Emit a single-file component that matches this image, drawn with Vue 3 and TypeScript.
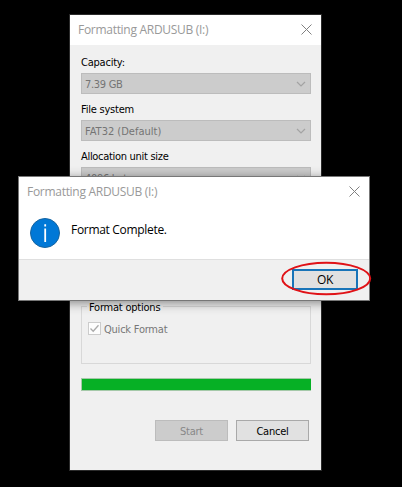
<script setup lang="ts">
interface Field { label: string; value: string; tone: string }

const title = 'Formatting ARDUSUB (I:)'
const fields: Field[] = [
  { label: 'Capacity:', value: '7.39 GB', tone: 'narrow' },
  { label: 'File system', value: 'FAT32 (Default)', tone: 'wide' },
  { label: 'Allocation unit size', value: '4096 bytes', tone: 'narrow' },
]
</script>

<template>
  <main class="desktop">
    <section class="window">
      <header class="titlebar">
        <span>{{ title }}</span>
        <svg class="close" width="11" height="11" viewBox="0 0 11 11"><path d="M.5.5l10 10M10.500.5l-10 10" /></svg>
      </header>
      <div class="body">
        <div v-for="field in fields" :key="field.label" class="field">
          <label :class="{ tight: field.label.startsWith('Alloc') }">{{ field.label }}</label>
          <div class="combo">
            <span :class="field.tone">{{ field.value }}</span>
            <svg width="10" height="6" viewBox="0 0 10 6"><path d="M1 1l4 4 4-4" /></svg>
          </div>
        </div>
        <div class="options">
          <span class="legend">Format options</span>
          <div class="check">
            <svg width="13" height="13" viewBox="0 0 13 13">
              <rect x=".5" y=".5" width="12" height="12" />
              <path d="M2.500 6.500l2.700 2.800 5.300-6" />
            </svg>
            <span>Quick Format</span>
          </div>
        </div>
        <div class="progress"></div>
        <div class="actions">
          <button class="start" disabled>Start</button>
          <button class="cancel">Cancel</button>
        </div>
      </div>
    </section>

    <section class="dialog">
      <header class="titlebar">
        <span>{{ title }}</span>
        <svg class="close" width="11" height="11" viewBox="0 0 11 11"><path d="M.5.5l10 10M10.500.5l-10 10" /></svg>
      </header>
      <div class="message">
        <svg width="30" height="30" viewBox="0 0 30 30">
          <circle cx="15" cy="15" r="14.500" fill="#0078d7" stroke="#17649f" />
          <path d="M15.200 10.500v13.500M15.200 6.200v2.200" stroke="#fff" stroke-width="1.800" />
        </svg>
        <span>Format Complete.</span>
      </div>
      <footer class="footer"><button class="ok">OK</button></footer>
      <svg class="ring" width="91" height="35" viewBox="0 0 91 35"><ellipse cx="45.200" cy="17.500" rx="44" ry="15.800" /></svg>
    </section>
  </main>
</template>

<style>
body { margin: 0; background: #000; }
</style>

<style scoped>
* { box-sizing: border-box; }
.desktop {
  position: relative;
  width: 402px;
  height: 487px;
  padding: 14px 0 0 69px;
  overflow: hidden;
  background: #000;
  font: condensed 11px "DejaVu Sans", sans-serif;
  letter-spacing: -0.22px;
  white-space: nowrap;
}
.window {
  width: 253px;
  height: 457px;
  border: 1px solid #2b2b2b;
  background: #f0f0f0;
}
.titlebar {
  display: flex;
  align-items: flex-start;
  justify-content: space-between;
  height: 30px;
  padding: 8px 9px 0 8px;
  background: #fff;
  color: #999;
  font: 12px/14px "Open Sans", sans-serif;
  letter-spacing: -0.29px;
}
.close { margin-top: 1px; }
.close path { fill: none; stroke: #808080; stroke-width: 1; }
.body { padding: 0 10px 0 11px; }
.field { height: 47px; padding-top: 11px; }
.field label { display: block; height: 17px; line-height: 14px; color: #000; }
.field label.tight { letter-spacing: -0.3px; }
.combo {
  display: flex;
  align-items: center;
  justify-content: space-between;
  height: 21px;
  padding: 0 4px 0 3px;
  border: 1px solid #bcbcbc;
  background: #ccc;
  color: #747474;
}
.combo span { padding-top: 2px; }
.combo .wide { letter-spacing: 0; }
.combo .narrow { letter-spacing: -0.3px; }
.combo path { fill: none; stroke: #a3a3a3; stroke-width: 1.200; }
.options {
  height: 58px;
  margin-top: 120px;
  border: 1px solid #d8d8d8;
}
.legend {
  display: block;
  width: 76px;
  height: 14px;
  margin: -7px 0 0 5px;
  padding-left: 2px;
  background: #f0f0f0;
  line-height: 15px;
}
.check { display: flex; align-items: center; gap: 3px; margin: 8px 0 0 6px; height: 13px; color: #777; }
.check span { padding-top: 2px; }
.check rect { fill: #fdfdfd; stroke: #ccc; }
.check path { fill: none; stroke: #aaa; stroke-width: 1.300; }
.progress {
  height: 13px;
  margin-top: 14px;
  border: 1px solid #a5c9a9;
  border-width: 1px 0 1px 1px;
  background: #06b025;
}
.actions { display: flex; justify-content: flex-end; gap: 8px; margin-top: 29px; padding-right: 2px; }
button { padding: 0; border-radius: 0; font: inherit; letter-spacing: inherit; }
.actions button { width: 73px; height: 21px; padding-top: 2px; line-height: 17px; }
.start { border: 1px solid #bcbcbc; background: #ccc; color: #888; }
.cancel { border: 1px solid #a9a9a9; background: #e1e1e1; color: #000; }
.dialog {
  position: absolute;
  left: 18px;
  top: 176px;
  width: 352px;
  height: 125px;
  border: 1px solid #777;
  background: #fff;
  box-shadow: 0 2px 10px rgba(0, 0, 0, 0.45);
}
.message {
  display: flex;
  height: 52px;
  padding: 11px 0 0 11px;
  gap: 11px;
  font: 12px/16px "Open Sans", sans-serif;
  letter-spacing: -0.31px;
  color: #000;
}
.message span { padding-top: 4px; }
.footer {
  display: flex;
  justify-content: flex-end;
  height: 41px;
  padding: 9px 11px 0 0;
  border-top: 1px solid #dfdfdf;
  background: #f0f0f0;
}
.ok {
  width: 66px;
  height: 21px;
  border: 2px solid #1874b8;
  background: #e1e1e1;
  color: #000;
  font: 12px/15px "Open Sans", sans-serif;
}
.ring { position: absolute; left: 262px; top: 84px; }
.ring ellipse { fill: none; stroke: #e01217; stroke-width: 2; }
</style>
